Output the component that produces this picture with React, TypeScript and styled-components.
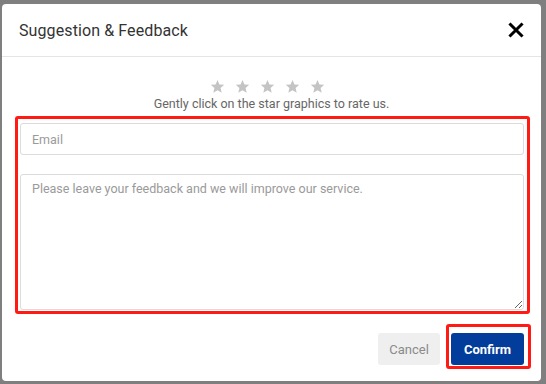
import styled, { createGlobalStyle } from 'styled-components';

const GlobalStyle = createGlobalStyle`
    html, body {
        margin: 0;
        padding: 0;
        background: #7f7f7f;
    }
    * {
        box-sizing: border-box;
    }
`;

const Backdrop = styled.div`
    width: 546px;
    height: 384px;
    padding: 4px 5px 3px 2px;
    background: #7f7f7f;
    font-family: Roboto, 'Liberation Sans', sans-serif;
`;

const Modal = styled.div`
    height: 100%;
    background: #fff;
    border-radius: 4px;
    display: flex;
    flex-direction: column;
`;

const Header = styled.div`
    height: 53px;
    flex-shrink: 0;
    display: flex;
    align-items: center;
    justify-content: space-between;
    padding: 0 17px 0 17px;
    border-bottom: 1px solid #e5e5e5;
`;

const Title = styled.div`
    font-size: 16px;
    color: #333;
    letter-spacing: 0.1px;
`;

const CloseButton = styled.button`
    border: none;
    background: none;
    padding: 0;
    width: 16px;
    height: 16px;
    display: flex;
    cursor: pointer;
`;

const Body = styled.div`
    display: flex;
    flex-direction: column;
    align-items: center;
    padding-top: 22px;
`;

const Stars = styled.div`
    display: flex;
    column-gap: 10px;
    height: 15px;
    margin-right: 8px;
`;

const Hint = styled.div`
    margin-top: 2px;
    font-size: 12.5px;
    color: #666;
    line-height: 15px;
`;

const Highlight = styled.div<{ $pad: string }>`
    border: 3px solid #ff1a14;
    border-radius: 3px;
    padding: ${(props) => props.$pad};
`;

const FormBox = styled(Highlight)`
    align-self: stretch;
    margin: 5px 11px 0 13px;
    display: flex;
    flex-direction: column;
    row-gap: 19px;
`;

const Input = styled.input`
    height: 32px;
    width: 100%;
    border: 1px solid #dcdcdc;
    border-radius: 3px;
    padding: 0 11px;
    font-family: Roboto, 'Liberation Sans', sans-serif;
    font-size: 12.5px;
    color: #333;
    outline: none;
    &::placeholder {
        color: #9a9a9a;
    }
`;

const TextArea = styled.textarea`
    height: 136px;
    width: 100%;
    border: 1px solid #dcdcdc;
    border-radius: 3px;
    padding: 6px 11px;
    font-family: Roboto, 'Liberation Sans', sans-serif;
    font-size: 12.5px;
    color: #333;
    outline: none;
    resize: vertical;
    display: block;
    &::placeholder {
        color: #9a9a9a;
    }
`;

const Footer = styled.div`
    display: flex;
    justify-content: flex-end;
    align-items: flex-end;
    column-gap: 6px;
    padding: 10px 10px 0 0;
`;

const Button = styled.button<{ $primary?: boolean }>`
    height: 32px;
    border: none;
    border-radius: 3px;
    padding: 0 ${(props) => (props.$primary ? '13px' : '11px')};
    font-family: Roboto, 'Liberation Sans', sans-serif;
    font-size: 13px;
    font-weight: ${(props) => (props.$primary ? 700 : 400)};
    background: ${(props) => (props.$primary ? '#023d9b' : '#efefef')};
    color: ${(props) => (props.$primary ? '#fff' : '#8a8a8a')};
    cursor: pointer;
`;

const CancelWrap = styled.div`
    padding-bottom: 4px;
`;

const Star = () => (
    <svg width="15" height="15" viewBox="0 0 24 24">
        <path
            d="M12 1.5l3.1 7.2 7.6.6-5.8 5 1.8 7.5L12 17.8l-6.7 4 1.8-7.5-5.8-5 7.6-.6z"
            fill="#c4c4c4"
        />
    </svg>
);

const App = () => {
    return (
        <>
            <GlobalStyle />
            <Backdrop>
                <Modal>
                    <Header>
                        <Title>Suggestion &amp; Feedback</Title>
                        <CloseButton aria-label="close">
                            <svg width="16" height="16" viewBox="0 0 16 16">
                                <path
                                    d="M2.5 2.5l11 11M13.5 2.5l-11 11"
                                    stroke="#000"
                                    strokeWidth="3"
                                    strokeLinecap="square"
                                />
                            </svg>
                        </CloseButton>
                    </Header>
                    <Body>
                        <Stars>
                            {[0, 1, 2, 3, 4].map((i) => (
                                <Star key={i} />
                            ))}
                        </Stars>
                        <Hint>Gently click on the star graphics to rate us.</Hint>
                        <FormBox $pad="4px 3px 1px 2px">
                            <Input placeholder="Email" />
                            <TextArea placeholder="Please leave your feedback and we will improve our service." />
                        </FormBox>
                    </Body>
                    <Footer>
                        <CancelWrap>
                            <Button>Cancel</Button>
                        </CancelWrap>
                        <Highlight $pad="6px 4px 1px 2px">
                            <Button $primary>Confirm</Button>
                        </Highlight>
                    </Footer>
                </Modal>
            </Backdrop>
        </>
    );
};

export default App;
